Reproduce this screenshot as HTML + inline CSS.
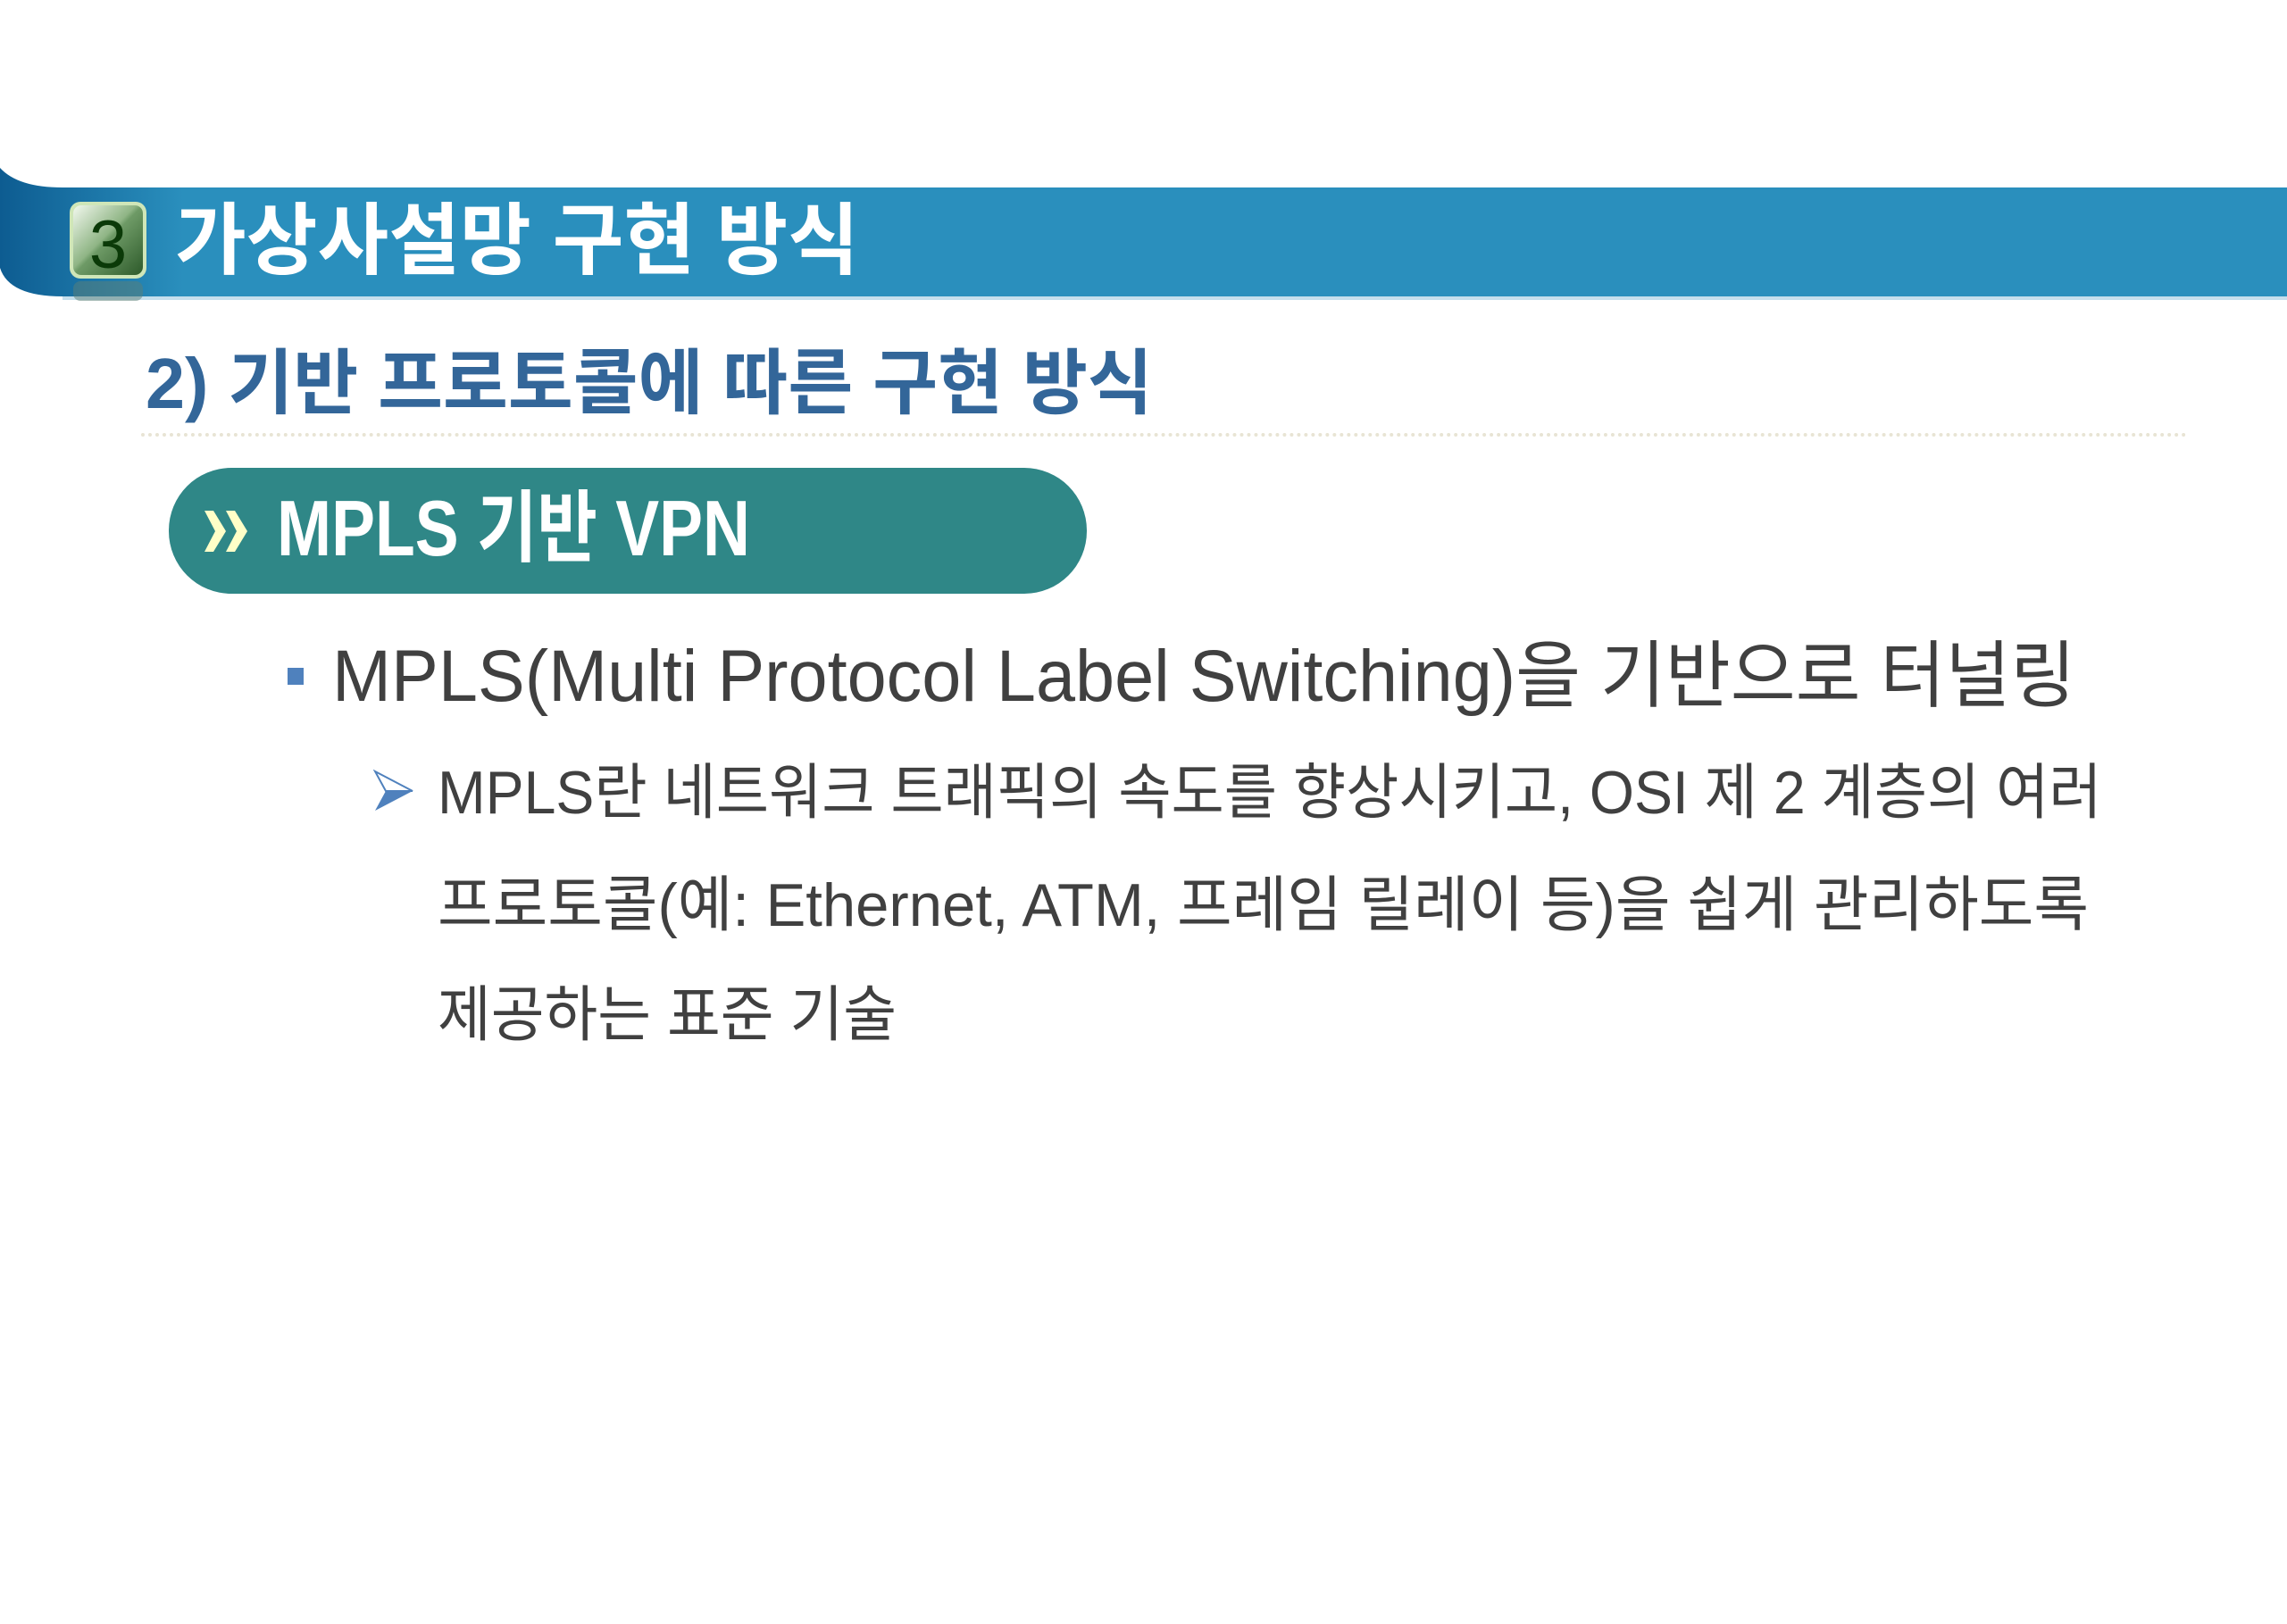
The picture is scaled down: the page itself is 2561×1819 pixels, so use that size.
<!DOCTYPE html>
<html><head><meta charset="utf-8"><style>
body{margin:0;width:2561px;height:1819px;background:#fff;position:relative;overflow:hidden;font-family:"Liberation Sans","Noto Sans CJK KR",sans-serif}
.a{position:absolute;white-space:nowrap;line-height:1;transform-origin:left top}
</style></head><body>
<svg class="a" style="left:0;top:180px" width="2561" height="170">
<defs>
<linearGradient id="lg" x1="0" x2="1"><stop offset="0" stop-color="#0d5c91"/><stop offset="0.08" stop-color="#2a8fbd"/><stop offset="1" stop-color="#2a8fbd"/></linearGradient>
<linearGradient id="gg" x1="0" y1="0" x2="1" y2="1"><stop offset="0" stop-color="#f2f8ee"/><stop offset="0.45" stop-color="#8fb585"/><stop offset="0.5" stop-color="#6e9a66"/><stop offset="1" stop-color="#2d5a2a"/></linearGradient>
</defs>
<path d="M0,8 Q20,30 70,30 L2561,30 L2561,152 L70,152 Q10,152 0,120 Z" fill="url(#lg)"/>
<path d="M70,152 L2561,152 L2561,156 L70,156 Z" fill="#8cc0dc" opacity="0.5"/>
<rect x="78" y="46" width="86" height="86" rx="12" fill="#cfe6b8"/>
<rect x="82" y="50" width="78" height="78" rx="9" fill="url(#gg)"/>
<rect x="82" y="135" width="78" height="22" rx="8" fill="#5b7f77" opacity="0.5"/>
<text x="121" y="120" font-size="76" fill="#0b3a08" text-anchor="middle" font-family="Liberation Sans,sans-serif">3</text>
</svg>
<div class="a" style="left:196px;top:226px;font-size:88px;font-weight:bold;color:#fff;transform:scaleX(0.985)">가상사설망 구현 방식</div>
<div class="a" style="left:163px;top:390px;font-size:80px;font-weight:bold;color:#336699;transform:scaleX(0.99)">2) 기반 프로토콜에 따른 구현 방식</div>
<div class="a" style="left:158px;top:485px;width:2292px;border-top:4px dotted #e8e4d4"></div>
<div class="a" style="left:189px;top:524px;width:1028px;height:141px;border-radius:70px;background:#2f8787"></div>
<svg class="a" style="left:229px;top:572px" width="50" height="46"><path d="M0,0 L10,0 L24,23 L10,46 L0,46 L12,23 Z M24,0 L34,0 L48,23 L34,46 L24,46 L36,23 Z" fill="#ffffc8"/></svg>
<div class="a" style="left:310px;top:548px;font-size:88px;font-weight:bold;color:#fff;transform:scaleX(0.833)">MPLS 기반 VPN</div>
<div class="a" style="left:322px;top:748px;width:18px;height:19px;background:#4f81bd"></div>
<div class="a" style="left:372px;top:717px;font-size:82px;color:#404040;transform:scaleX(0.966)">MPLS(Multi Protocol Label Switching)을 기반으로 터널링</div>
<svg class="a" style="left:418px;top:862px" width="46" height="48"><path d="M2,2 L44,24 L2,46 L14,24 Z" fill="#4f81bd"/><path d="M2,2 L44,24 L14,24 Z" fill="#fff" stroke="#4f81bd" stroke-width="2"/></svg>
<div class="a" style="left:490px;top:854px;font-size:68px;color:#404040;transform:scaleX(0.947)">MPLS란 네트워크 트래픽의 속도를 향상시키고, OSI 제 2 계층의 여러</div>
<div class="a" style="left:490px;top:980px;font-size:68px;color:#404040;transform:scaleX(0.985)">프로토콜(예: Ethernet, ATM, 프레임 릴레이 등)을 쉽게 관리하도록</div>
<div class="a" style="left:490px;top:1103px;font-size:68px;color:#404040;transform:scaleX(0.955)">제공하는 표준 기술</div>
</body></html>
